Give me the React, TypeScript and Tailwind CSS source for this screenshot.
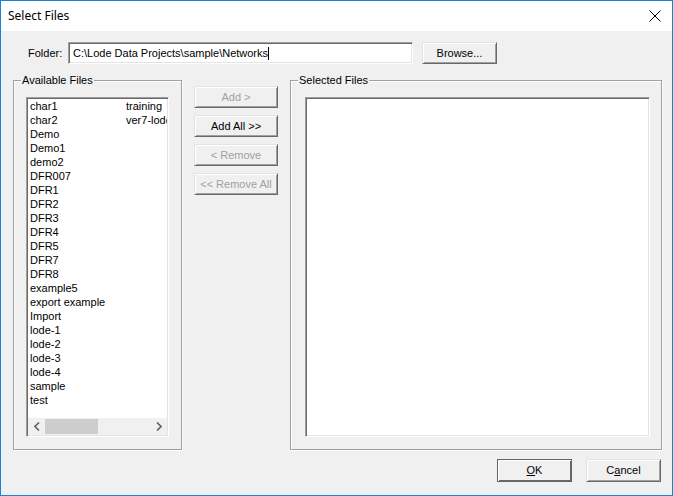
const files = [
  "char1", "char2", "Demo", "Demo1", "demo2", "DFR007", "DFR1", "DFR2", "DFR3", "DFR4", "DFR5",
  "DFR7", "DFR8", "example5", "export example", "Import", "lode-1", "lode-2", "lode-3", "lode-4",
  "sample", "test",
];
const files2 = ["training", "ver7-lode"];

const raised =
  "border border-t-[#e3e3e3] border-l-[#e3e3e3] border-r-[#696969] border-b-[#696969] bg-[#f0f0f0] shadow-[inset_1px_1px_0_#fff,inset_-1px_-1px_0_#a0a0a0]";
const sunken =
  "border border-t-[#a0a0a0] border-l-[#a0a0a0] border-r-white border-b-white shadow-[inset_1px_1px_0_#696969,inset_-1px_-1px_0_#e3e3e3]";

function Group({ label, className, children }: { label: string; className: string; children: React.ReactNode }) {
  return (
    <div className={`relative border border-[#a0a0a0] shadow-[inset_1px_1px_0_#fff,1px_1px_0_#fff] ${className}`}>
      <span className="absolute left-[7px] top-[-8px] bg-[#f0f0f0] px-[1px] leading-[14px]">{label}</span>
      {children}
    </div>
  );
}

function SideButton({ label, disabled }: { label: string; disabled?: boolean }) {
  return (
    <button
      className={`${raised} w-[84px] h-[22px] flex items-center justify-center ${disabled ? "text-[#a0a0a0]" : "text-black"}`}
    >
      {label}
    </button>
  );
}

export default function App() {
  return (
    <div
      className="w-[673px] h-[496px] border border-[#1883d7] bg-[#f0f0f0] flex flex-col text-[11px] text-black overflow-hidden"
      style={{ fontFamily: '"Liberation Sans", Arial, sans-serif' }}
    >
      {/* title bar */}
      <div className="h-[30px] bg-white flex items-center justify-between pl-[7px] pr-[10px] shrink-0">
        <span className="text-[12px]" style={{ fontFamily: '"Noto Sans", "Open Sans", sans-serif' }}>
          Select Files
        </span>
        <svg width="12" height="12" viewBox="0 0 12 12" className="mr-[1px]">
          <path d="M0.5 0.5 L11.5 11.5 M11.5 0.5 L0.5 11.5" stroke="#000" strokeWidth="1" />
        </svg>
      </div>

      {/* body */}
      <div className="flex flex-col pt-[11px] pl-[12px] pr-[11px]">
        <div className="flex items-center h-[22px]">
          <span className="w-[55px] pl-[15px]">Folder:</span>
          <div className={`${sunken} bg-white w-[345px] h-[22px] flex items-center pl-[4px]`}>
            <span>C:\Lode Data Projects\sample\Networks</span>
            <span className="inline-block w-[1px] h-[13px] bg-black" />
          </div>
          <button className={`${raised} ml-[9px] w-[75px] h-[22px] flex items-center justify-center`}>Browse...</button>
        </div>

        <div className="flex mt-[16px] h-[370px]">
          <Group label="Available Files" className="w-[169px] shrink-0 pt-[16px] px-[12px] pb-[12px] flex">
            <div className={`${sunken} bg-white w-[143px] min-w-0 overflow-hidden flex flex-col px-[1px] pt-[1px] pb-[1px]`}>
              <div className="flex-1 min-w-0 flex overflow-hidden pl-[2px]">
                <div className="w-[96px] shrink-0 flex flex-col">
                  {files.map((f) => (
                    <div key={f} className="h-[14px] leading-[14px] whitespace-nowrap">
                      {f}
                    </div>
                  ))}
                </div>
                <div className="w-[96px] shrink-0 flex flex-col">
                  {files2.map((f) => (
                    <div key={f} className="h-[14px] leading-[14px] whitespace-nowrap">
                      {f}
                    </div>
                  ))}
                </div>
              </div>
              <div className="h-[17px] bg-[#f0f0f0] flex items-center">
                <div className="w-[17px] h-[17px] flex items-center justify-center">
                  <svg width="6" height="9" viewBox="0 0 6 9">
                    <path d="M5 0.5 L1 4.5 L5 8.5" stroke="#606060" strokeWidth="1.6" fill="none" />
                  </svg>
                </div>
                <div className="w-[53px] h-[15px] bg-[#cdcdcd]" />
                <div className="flex-1" />
                <div className="w-[17px] h-[17px] flex items-center justify-center">
                  <svg width="6" height="9" viewBox="0 0 6 9">
                    <path d="M1 0.5 L5 4.5 L1 8.5" stroke="#606060" strokeWidth="1.6" fill="none" />
                  </svg>
                </div>
              </div>
            </div>
          </Group>

          <div className="w-[84px] shrink-0 mx-[12px] pt-[6px] flex flex-col gap-[7px]">
            <SideButton label="Add >" disabled />
            <SideButton label="Add All >>" />
            <SideButton label="< Remove" disabled />
            <SideButton label="<< Remove All" disabled />
          </div>

          <Group label="Selected Files" className="w-[372px] shrink-0 pt-[16px] pl-[14px] pr-[11px] pb-[12px] flex">
            <div className={`${sunken} bg-white flex-1`} />
          </Group>
        </div>

        <div className="flex justify-end mt-[9px] gap-[14px]">
          <button className="w-[75px] h-[23px] border border-[#646464] bg-[#f0f0f0] shadow-[inset_1px_1px_0_#fff,inset_-1px_-1px_0_#696969] flex items-center justify-center">
            <span>
              <u>O</u>K
            </span>
          </button>
          <button className={`${raised} w-[75px] h-[23px] flex items-center justify-center`}>
            <span>
              C<u>a</u>ncel
            </span>
          </button>
        </div>
      </div>
    </div>
  );
}
